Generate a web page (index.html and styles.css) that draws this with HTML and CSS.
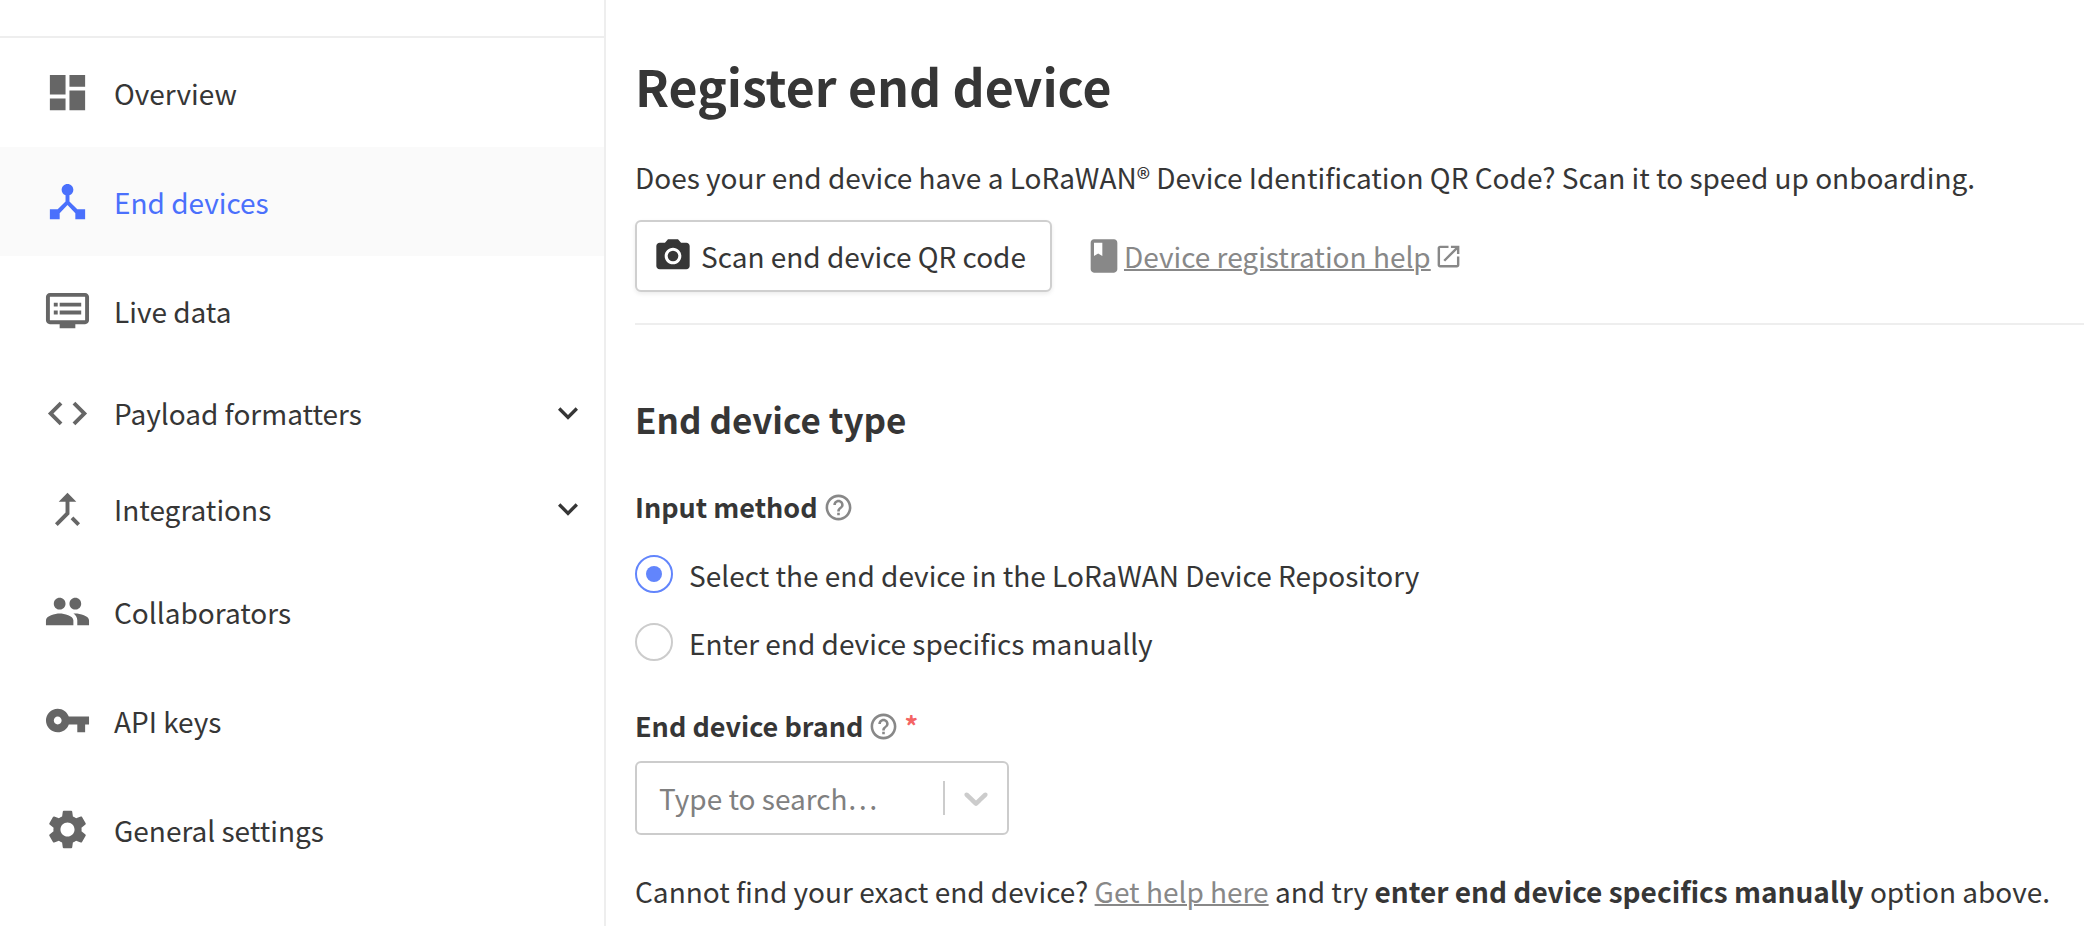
FILE: index.html
```html
<!DOCTYPE html>
<html lang="en">
<head>
<meta charset="utf-8">
<title>Register end device</title>
<link rel="stylesheet" href="styles.css">
</head>
<body>
<div class="layout">
  <aside class="sidebar">
    <div class="sidebar-head"></div>
    <nav>
      <ul class="nav">
        <li><a class="nav-item" href="#overview">
          <svg class="nav-icon" viewBox="0 0 24 24" aria-hidden="true"><path d="M3 13h8V3H3v10zm0 8h8v-6H3v6zm10 0h8V11h-8v10zm0-18v6h8V3h-8z"/></svg>
          <span>Overview</span></a></li>
        <li><a class="nav-item active" href="#devices" aria-current="page">
          <svg class="nav-icon" viewBox="0 0 24 24" aria-hidden="true"><path d="M17 16l-4-4V8.82C14.16 8.4 15 7.3 15 6c0-1.66-1.34-3-3-3S9 4.34 9 6c0 1.3.84 2.4 2 2.82V12l-4 4H3v5h5v-3.05l4-4.2 4 4.2V21h5v-5h-4z"/></svg>
          <span>End devices</span></a></li>
        <li><a class="nav-item" href="#data">
          <svg class="nav-icon" viewBox="0 0 24 24" aria-hidden="true"><path d="M21 3H3c-1.1 0-2 .9-2 2v12c0 1.1.9 2 2 2h5v2h8v-2h5c1.1 0 1.99-.9 1.99-2L23 5c0-1.1-.9-2-2-2zm0 14H3V5h18v12zm-2-9H8v2h11V8zm0 4H8v2h11v-2zM7 8H5v2h2V8zm0 4H5v2h2v-2z"/></svg>
          <span>Live data</span></a></li>
        <li><button class="nav-item compact" type="button" aria-expanded="false">
          <svg class="nav-icon" viewBox="0 0 24 24" aria-hidden="true"><path d="M9.4 16.600L4.800 12l4.600-4.600L8 6l-6 6 6 6 1.400-1.400zm5.200 0l4.600-4.600-4.600-4.600L16 6l6 6-6 6-1.400-1.400z"/></svg>
          <span>Payload formatters</span>
          <svg class="nav-chevron" viewBox="0 0 24 24" aria-hidden="true"><path d="M16.590 8.590L12 13.170 7.410 8.590 6 10l6 6 6-6z"/></svg></button></li>
        <li><button class="nav-item compact" type="button" aria-expanded="false">
          <svg class="nav-icon" viewBox="0 0 24 24" aria-hidden="true"><path d="M17 20.410L18.410 19 15 15.590 13.590 17 17 20.410zM7.500 8H11v5.590L5.590 19 7 20.410l6-6V8h3.500L12 3.500 7.500 8z"/></svg>
          <span>Integrations</span>
          <svg class="nav-chevron" viewBox="0 0 24 24" aria-hidden="true"><path d="M16.590 8.590L12 13.170 7.410 8.590 6 10l6 6 6-6z"/></svg></button></li>
        <li><a class="nav-item" href="#collaborators">
          <svg class="nav-icon" viewBox="0 0 24 24" aria-hidden="true"><path d="M16 11c1.660 0 2.990-1.340 2.990-3S17.660 5 16 5c-1.660 0-3 1.340-3 3s1.340 3 3 3zm-8 0c1.660 0 2.990-1.340 2.990-3S9.660 5 8 5C6.340 5 5 6.340 5 8s1.340 3 3 3zm0 2c-2.330 0-7 1.170-7 3.500V19h14v-2.500c0-2.330-4.670-3.500-7-3.500zm8 0c-.29 0-.62.02-.97.05 1.160.84 1.970 1.970 1.970 3.450V19h6v-2.500c0-2.330-4.670-3.500-7-3.500z"/></svg>
          <span>Collaborators</span></a></li>
        <li><a class="nav-item" href="#keys">
          <svg class="nav-icon" viewBox="0 0 24 24" aria-hidden="true"><path d="M12.650 10C11.830 7.670 9.610 6 7 6c-3.310 0-6 2.690-6 6s2.690 6 6 6c2.610 0 4.830-1.670 5.650-4H17v4h4v-4h2v-4H12.650zM7 14c-1.100 0-2-.9-2-2s.9-2 2-2 2 .9 2 2-.9 2-2 2z"/></svg>
          <span>API keys</span></a></li>
        <li><a class="nav-item" href="#settings">
          <svg class="nav-icon" viewBox="0 0 24 24" aria-hidden="true"><path d="M19.140 12.940c.04-.3.060-.61.060-.94 0-.32-.02-.64-.07-.94l2.030-1.580c.18-.14.230-.41.120-.61l-1.920-3.320c-.12-.22-.37-.29-.59-.22l-2.390.96c-.5-.38-1.030-.7-1.620-.94l-.36-2.540c-.04-.24-.24-.41-.48-.41h-3.840c-.24 0-.43.170-.47.410l-.36 2.540c-.59.240-1.130.570-1.620.940l-2.390-.96c-.22-.08-.47 0-.59.220L2.740 8.870c-.12.210-.08.470.12.610l2.030 1.580c-.05.3-.09.630-.09.940s.02.640.07.940l-2.030 1.580c-.18.140-.23.410-.12.610l1.920 3.320c.12.220.37.290.59.220l2.390-.96c.5.380 1.030.7 1.620.94l.36 2.540c.05.240.24.410.48.410h3.840c.24 0 .44-.17.470-.41l.36-2.540c.59-.24 1.130-.56 1.620-.94l2.390.96c.22.080.47 0 .59-.22l1.920-3.320c.12-.22.070-.47-.12-.61l-2.010-1.580zM12 15.600c-1.980 0-3.600-1.620-3.600-3.600s1.620-3.600 3.600-3.600 3.600 1.620 3.600 3.600-1.620 3.600-3.600 3.600z"/></svg>
          <span>General settings</span></a></li>
      </ul>
    </nav>
  </aside>

  <main class="content">
    <h1 class="title">Register end device</h1>
    <p class="intro">Does your end device have a LoRaWAN® Device Identification QR Code? Scan it to speed up onboarding.</p>
    <div class="actions">
      <button class="scan" type="button">
        <svg class="icon" viewBox="0 0 24 24" aria-hidden="true"><circle cx="12" cy="12" r="3.200"/><path d="M9 2L7.170 4H4c-1.100 0-2 .9-2 2v12c0 1.100.9 2 2 2h16c1.100 0 2-.9 2-2V6c0-1.100-.9-2-2-2h-3.170L15 2H9zm3 15c-2.760 0-5-2.240-5-5s2.240-5 5-5 5 2.240 5 5-2.240 5-5 5z"/></svg>
        <span>Scan end device QR code</span>
      </button>
      <div class="help-link">
        <svg class="icon" viewBox="0 0 24 24" aria-hidden="true"><path d="M18 2H6c-1.100 0-2 .9-2 2v16c0 1.100.9 2 2 2h12c1.100 0 2-.9 2-2V4c0-1.100-.9-2-2-2zM6 4h5v8l-2.500-1.500L6 12V4z"/></svg>
        <a class="link" href="#help">Device registration help</a>
        <svg class="external" viewBox="0 0 24 24" aria-hidden="true"><path d="M19 19H5V5h7V3H5c-1.110 0-2 .9-2 2v14c0 1.100.89 2 2 2h14c1.100 0 2-.9 2-2v-7h-2v7zM14 3v2h3.590l-9.830 9.830 1.410 1.410L19 6.410V10h2V3h-7z"/></svg>
      </div>
    </div>
    <hr class="divider">

    <form>
      <h2 class="section-title">End device type</h2>
      <fieldset class="methods">
        <legend class="field-label"><span>Input method</span>
          <svg class="help" viewBox="0 0 24 24" aria-hidden="true"><path d="M11 18h2v-2h-2v2zm1-16C6.480 2 2 6.480 2 12s4.480 10 10 10 10-4.480 10-10S17.520 2 12 2zm0 18c-4.410 0-8-3.590-8-8s3.590-8 8-8 8 3.590 8 8-3.590 8-8 8zm0-14c-2.210 0-4 1.790-4 4h2c0-1.100.9-2 2-2s2 .9 2 2c0 2-3 1.750-3 5h2c0-2.250 3-2.500 3-5 0-2.210-1.790-4-4-4z"/></svg>
        </legend>
        <label class="choice"><input class="radio" type="radio" name="method" checked><span>Select the end device in the LoRaWAN Device Repository</span></label>
        <label class="choice"><input class="radio" type="radio" name="method"><span>Enter end device specifics manually</span></label>
      </fieldset>

      <div class="field-label">
        <label for="brand">End device brand</label>
        <svg class="help" viewBox="0 0 24 24" aria-hidden="true"><path d="M11 18h2v-2h-2v2zm1-16C6.480 2 2 6.480 2 12s4.480 10 10 10 10-4.480 10-10S17.520 2 12 2zm0 18c-4.410 0-8-3.590-8-8s3.590-8 8-8 8 3.590 8 8-3.590 8-8 8zm0-14c-2.210 0-4 1.790-4 4h2c0-1.100.9-2 2-2s2 .9 2 2c0 2-3 1.750-3 5h2c0-2.250 3-2.500 3-5 0-2.210-1.790-4-4-4z"/></svg>
        <span class="required">*</span>
      </div>
      <div class="combo">
        <input class="combo-input" id="brand" type="text" role="combobox" aria-expanded="false" placeholder="Type to search…">
        <button class="combo-toggle" type="button" aria-label="Show brands">
          <svg class="icon" viewBox="0 0 20 20" aria-hidden="true"><path d="M4.516 7.548c0.436-0.446 1.043-0.481 1.576 0l3.908 3.747 3.908-3.747c0.533-0.481 1.141-0.446 1.574 0 0.436 0.445 0.408 1.197 0 1.615-0.406 0.418-4.695 4.502-4.695 4.502-0.217 0.223-0.502 0.335-0.787 0.335s-0.570-0.112-0.789-0.335c0 0-4.287-4.084-4.695-4.502s-0.436-1.170 0-1.615z"/></svg>
        </button>
      </div>
      <p class="note">Cannot find your exact end device? <a class="link" href="#support">Get help here</a> and try <b>enter end device specifics manually</b> option above.</p>
    </form>
  </main>
</div>
</body>
</html>
```
FILE: styles.css
```css
* {
  box-sizing: border-box;
}

body {
  margin: 0;
  background: #fff;
  color: #363636;
  font-family: "Noto Sans CJK SC", "Noto Sans", sans-serif;
  font-size: 28px;
  line-height: 40px;
}

button,
input {
  font: inherit;
  color: inherit;
}

svg {
  flex: none;
  fill: currentColor;
}

h1, h2, p, ul, fieldset, legend {
  margin: 0;
  padding: 0;
}

.layout {
  display: flex;
  min-height: 100vh;
}

.sidebar {
  flex: 0 0 606px;
  border-right: 2px solid #eee;
}

.sidebar-head {
  height: 38px;
  border-bottom: 2px solid #eee;
}

.nav {
  list-style: none;
}

.nav-item {
  display: flex;
  align-items: center;
  gap: 23px;
  width: 100%;
  height: 109px;
  padding: 0 16px 0 44px;
  border: 0;
  background: none;
  color: #363636;
  text-align: left;
  text-decoration: none;
}

.nav-item.compact {
  height: 96px;
}

.nav-icon {
  width: 47px;
  height: 47px;
  color: #666;
}

.nav-chevron {
  width: 40px;
  height: 40px;
  margin-left: auto;
}

.nav-item.active {
  background: #fafafa;
}

.nav-item.active,
.nav-item.active .nav-icon {
  color: #4a70fc;
}

.content {
  flex: 1;
  min-width: 0;
  padding: 53px 0 0 29px;
}

.title {
  font-size: 50px;
  line-height: 64px;
  font-weight: 600;
}

.intro {
  margin-top: 40px;
}

.actions {
  display: flex;
  align-items: center;
  gap: 32px;
  margin-top: 23px;
}

.scan {
  display: flex;
  align-items: center;
  gap: 8px;
  height: 72px;
  padding: 0 24px 0 16px;
  border: 2px solid #cfcfcf;
  border-radius: 6px;
  background: #fff;
  box-shadow: 0 2px 4px rgba(0, 0, 0, 0.08);
}

.icon {
  width: 40px;
  height: 40px;
}

.help-link {
  display: flex;
  align-items: center;
  color: #888;
}

.link {
  color: #888;
  text-decoration: underline;
  text-decoration-thickness: 2px;
}

.external {
  width: 29px;
  height: 29px;
  margin-left: 3px;
}

.divider {
  height: 2px;
  margin: 31px 0 0;
  border: 0;
  background: #eee;
}

.section-title {
  margin-top: 72px;
  font-size: 35px;
  line-height: 44px;
  font-weight: 600;
}

.methods {
  display: grid;
  gap: 28px;
  margin: 46px 0 43px;
  border: 0;
}

.field-label {
  display: flex;
  align-items: center;
  gap: 5px;
  font-size: 27px;
  font-weight: 600;
}

.methods .field-label {
  margin-bottom: 28px;
}

.help {
  width: 31px;
  height: 31px;
  color: #888;
}

.required {
  color: #f46464;
}

.choice {
  display: flex;
  align-items: flex-start;
  gap: 16px;
}

.radio {
  display: grid;
  place-items: center;
  appearance: none;
  width: 38px;
  height: 38px;
  margin: 0;
  border: 2px solid #ccc;
  border-radius: 50%;
}

.radio:checked {
  border-color: #6285fc;
}

.radio:checked::before {
  content: "";
  width: 16px;
  height: 16px;
  border-radius: 50%;
  background: #6285fc;
}

.combo {
  display: flex;
  align-items: center;
  width: 374px;
  height: 74px;
  margin-top: 15px;
  border: 2px solid #ccc;
  border-radius: 6px;
}

.combo-input {
  flex: 1;
  min-width: 0;
  height: 40px;
  padding: 0 0 0 22px;
  border: 0;
  background: none;
  outline: 0;
}

.combo-input::placeholder {
  color: #808080;
  opacity: 1;
}

.combo-toggle {
  display: flex;
  align-items: center;
  height: 34px;
  padding: 0 11px;
  border: 0;
  border-left: 2px solid #ccc;
  background: none;
  color: #ccc;
}

.note {
  margin-top: 36px;
}
```
